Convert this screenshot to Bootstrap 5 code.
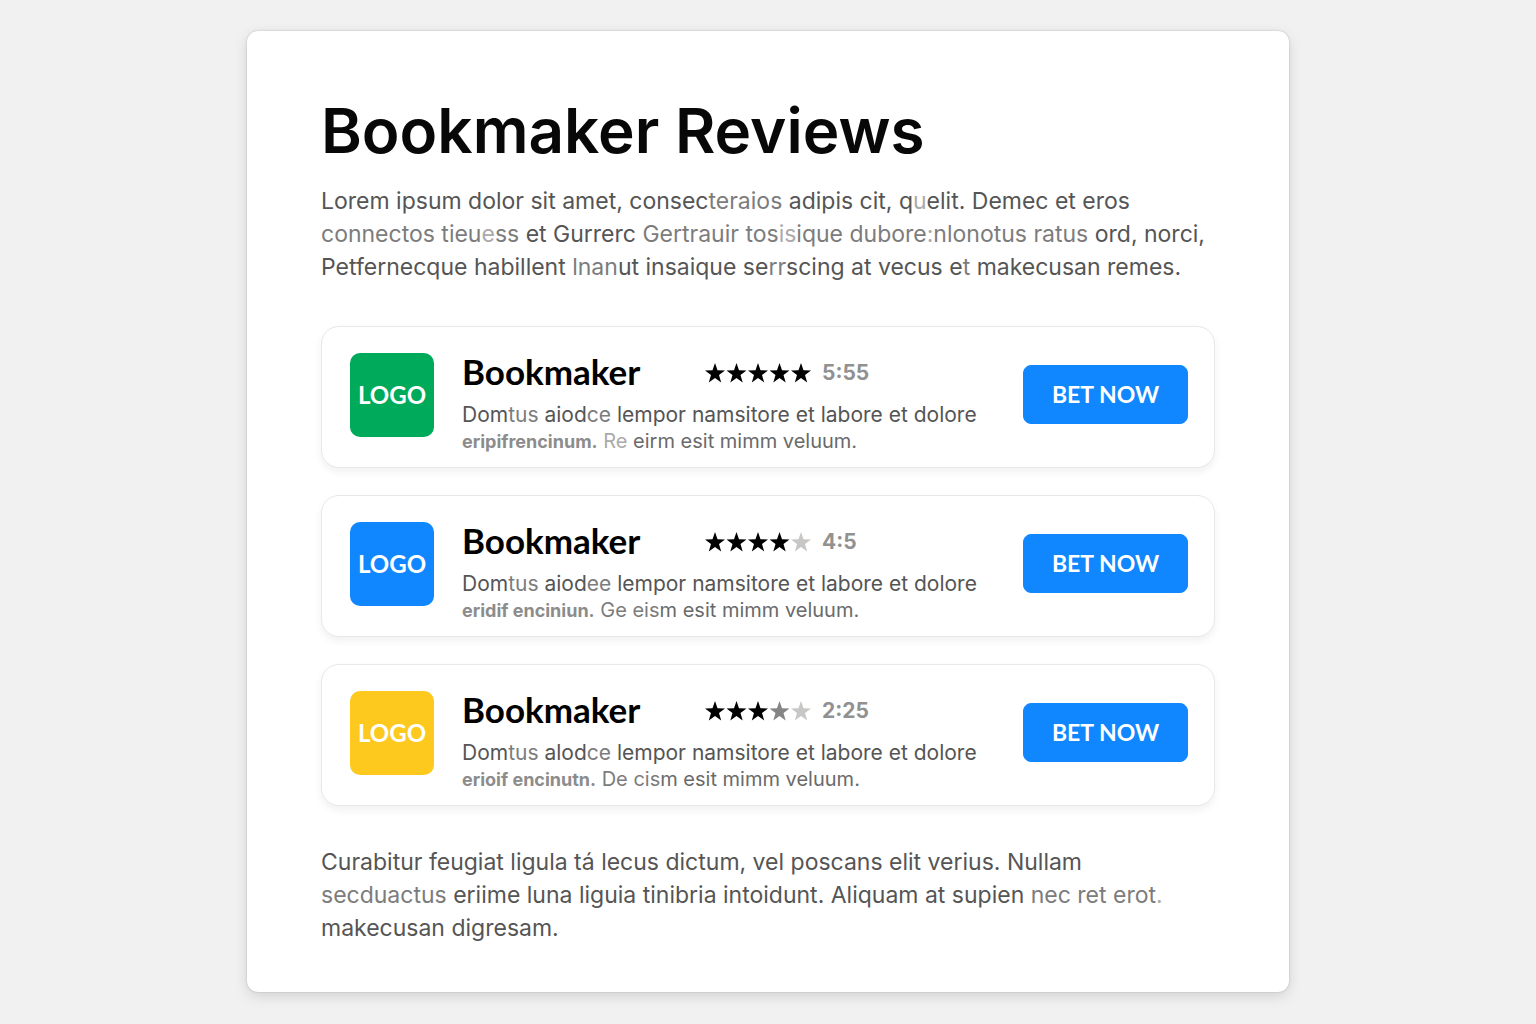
<!DOCTYPE html>
<html lang="en">
<head>
<meta charset="utf-8">
<meta name="viewport" content="width=device-width, initial-scale=1">
<title>Bookmaker Reviews</title>
<link href="https://cdn.jsdelivr.net/npm/bootstrap@5.3.0/dist/css/bootstrap.min.css" rel="stylesheet">
<style>
  body { background: #f1f1f1; font-family: Inter, "Liberation Sans", sans-serif; color: #000; }
  .panel { max-width: 1042px; margin: 31px auto; padding: 66px 74px 47px; border-radius: 11px;
    box-shadow: 0 4px 14px rgba(0,0,0,.13), 0 0 2px rgba(0,0,0,.22); }
  .page-title { font-size: 62px; line-height: 68px; font-weight: 600; margin-bottom: 20px; color: #080808; }
  .prose { font-size: 23px; line-height: 33px; font-weight: 400; color: #555; }
  .intro { margin-bottom: 42px; }
  .reviews { gap: 27px; margin-bottom: 40px; }
  .review { padding: 26px 26px 13px 28px; gap: 28px; border: 1px solid #e8e8e8; border-radius: 18px;
    box-shadow: 0 4px 8px rgba(0,0,0,.06); }
  .logo { width: 84px; height: 84px; border-radius: 10px; color: #fff; font-size: 24px; font-weight: 700; font-family: Lato, sans-serif; }
  .logo-green { background: #00aa5b; }
  .logo-blue { background: #1187ff; }
  .logo-yellow { background: #fdc91f; }
  .name { width: 243px; padding-bottom: 4px; font-family: Lato, sans-serif; font-size: 35px; line-height: 36px; font-weight: 700; }
  .heading { margin-bottom: 9px; }
  .stars { width: 107px; height: 20px; }
  .score { font-size: 21px; line-height: 26px; font-weight: 700; color: #919191; margin-left: 10px; }
  .blurb { font-size: 21px; line-height: 26px; color: #555; font-weight: 400; }
  .blurb-end { font-size: 20px; color: #6a6a6a; }
  .blurb b { color: #8c8c8c; font-weight: 700; font-size: 18px; line-height: 18px; }
  .faded { color: #7c7c7c; }
  .pale { color: #aaa; }
  .bet { width: 165px; height: 59px; margin-top: 12px; padding: 0; border-radius: 8px; font-size: 23px; font-weight: 700; font-family: Lato, sans-serif;
    --bs-btn-bg: #1187ff; --bs-btn-border-color: #1187ff; }
</style>
</head>
<body>
<svg class="d-none" aria-hidden="true">
  <symbol id="star" viewBox="0 0 20 20"><path d="M10 0l2.500 7.200 7.500.2-6 4.600 2.200 7.400L10 15l-6.200 4.400L6 12 0 7.400l7.500-.2z"/></symbol>
</svg>
<main class="panel bg-white">
  <h1 class="page-title">Bookmaker Reviews</h1>
  <p class="prose intro">Lorem ipsum dolor sit amet, consec<span class="faded">teraios</span> adipis cit, q<span class="pale">u</span>elit. Demec et eros<br>
    <span class="faded">connectos tieu</span><span class="pale">e</span><span class="faded">ss</span> et Gurrerc <span class="faded">Gertrauir tos</span><span class="pale">is</span><span class="faded">ique dubore</span><span class="pale">:</span><span class="faded">nlonotus ratus</span> ord, norci,<br>
    Petfernecque habillent <span class="faded">lnan</span>ut insaique se<span class="faded">rr</span>scing at vecus e<span class="faded">t</span> makecusan remes.</p>

  <section class="reviews d-flex flex-column">
    <article class="review d-flex align-items-start bg-white">
      <div class="logo logo-green d-flex align-items-center justify-content-center flex-shrink-0">LOGO</div>
      <div class="flex-grow-1">
        <div class="heading d-flex align-items-center">
          <h2 class="name mb-0">Bookmaker</h2>
          <svg class="stars" viewBox="0 0 107 20" role="img" aria-label="5 of 5 stars">
            <use href="#star" width="20" height="20"/><use href="#star" x="21.500" width="20" height="20"/><use href="#star" x="43" width="20" height="20"/><use href="#star" x="64.500" width="20" height="20"/><use href="#star" x="86" width="20" height="20"/>
          </svg>
          <span class="score">5:55</span>
        </div>
        <p class="blurb mb-0">Dom<span class="faded">tus</span> aiod<span class="faded">ce</span> lempor namsitore et labore et dolore<br>
          <span class="blurb-end"><b>eripifrencinum.</b> <span class="pale">Re</span> eirm esit mimm veluum.</span></p>
      </div>
      <button type="button" class="bet btn btn-primary flex-shrink-0">BET NOW</button>
    </article>

    <article class="review d-flex align-items-start bg-white">
      <div class="logo logo-blue d-flex align-items-center justify-content-center flex-shrink-0">LOGO</div>
      <div class="flex-grow-1">
        <div class="heading d-flex align-items-center">
          <h2 class="name mb-0">Bookmaker</h2>
          <svg class="stars" viewBox="0 0 107 20" role="img" aria-label="4 of 5 stars">
            <use href="#star" width="20" height="20"/><use href="#star" x="21.500" width="20" height="20"/><use href="#star" x="43" width="20" height="20"/><use href="#star" x="64.500" width="20" height="20"/><use href="#star" x="86" width="20" height="20" fill="#c8c7c5"/>
          </svg>
          <span class="score">4:5</span>
        </div>
        <p class="blurb mb-0">Dom<span class="faded">tus</span> aiod<span class="faded">ee</span> lempor namsitore et labore et dolore<br>
          <span class="blurb-end"><b>eridif enciniun.</b> <span class="faded">Ge eis</span>m esit mimm veluum.</span></p>
      </div>
      <button type="button" class="bet btn btn-primary flex-shrink-0">BET NOW</button>
    </article>

    <article class="review d-flex align-items-start bg-white">
      <div class="logo logo-yellow d-flex align-items-center justify-content-center flex-shrink-0">LOGO</div>
      <div class="flex-grow-1">
        <div class="heading d-flex align-items-center">
          <h2 class="name mb-0">Bookmaker</h2>
          <svg class="stars" viewBox="0 0 107 20" role="img" aria-label="3 and a half of 5 stars">
            <use href="#star" width="20" height="20"/><use href="#star" x="21.500" width="20" height="20"/><use href="#star" x="43" width="20" height="20"/><use href="#star" x="64.500" width="20" height="20" fill="#858585"/><use href="#star" x="86" width="20" height="20" fill="#c8c7c5"/>
          </svg>
          <span class="score">2:25</span>
        </div>
        <p class="blurb mb-0">Dom<span class="faded">tus</span> alod<span class="faded">ce</span> lempor namsitore et labore et dolore<br>
          <span class="blurb-end"><b>erioif encinutn.</b> <span class="faded">De cis</span>m esit mimm veluum.</span></p>
      </div>
      <button type="button" class="bet btn btn-primary flex-shrink-0">BET NOW</button>
    </article>
  </section>

  <p class="prose mb-0">Curabitur feugiat ligula tá lecus dictum, vel poscans elit verius. Nullam<br>
    <span class="faded">secduactus</span> eriime luna liguia tinibria intoidunt. Aliquam at supien <span class="faded">nec ret erot</span><span class="pale">.</span><br>
    makecusan digresam.</p>
</main>
<script src="https://cdn.jsdelivr.net/npm/bootstrap@5.3.0/dist/js/bootstrap.bundle.min.js"></script>
</body>
</html>
